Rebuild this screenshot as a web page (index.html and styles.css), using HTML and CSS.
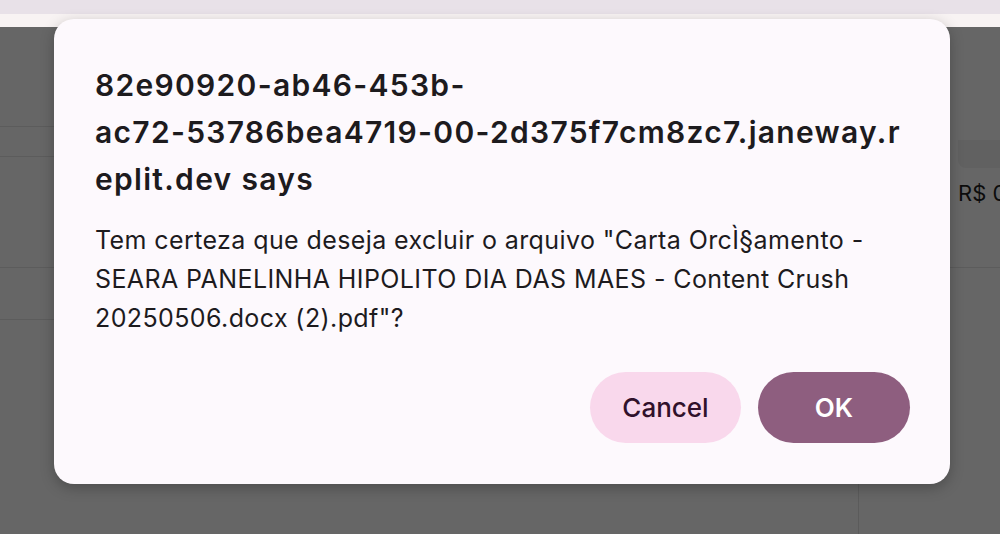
FILE: index.html
```html
<!DOCTYPE html>
<html lang="pt">
<head>
<meta charset="utf-8">
<title>Confirm</title>
<link rel="stylesheet" href="styles.css">
</head>
<body>
<div class="chrome"></div>
<div class="subbar"></div>
<main class="page">
  <div class="left">
    <div class="row r1"></div>
    <div class="row r2"></div>
    <div class="row r3"></div>
    <div class="row r4"></div>
  </div>
  <div class="right">
    <div class="field"></div>
    <div class="price">R$ 0,00</div>
    <div class="rline"></div>
    <div class="vpanel"></div>
  </div>
  <div class="overlay"></div>
</main>
<div class="dialog" role="dialog">
  <h1 class="title">82e90920-ab46-453b-<br>ac72-53786bea4719-00-2d375f7cm8zc7.janeway.r<br>eplit.dev says</h1>
  <p class="message">Tem certeza que deseja excluir o arquivo "Carta OrcÌ§amento -<br>SEARA PANELINHA HIPOLITO DIA DAS MAES - Content Crush<br>20250506.docx (2).pdf"?</p>
  <div class="actions">
    <button class="btn cancel">Cancel</button>
    <button class="btn ok">OK</button>
  </div>
</div>
</body>
</html>
```
FILE: styles.css
```css
html, body {
  margin: 0;
  padding: 0;
  width: 1000px;
  height: 534px;
  overflow: hidden;
  font-family: Inter, "Noto Sans", sans-serif;
}
.chrome {
  height: 14px;
  background: #e8e1e8;
}
.subbar {
  height: 13px;
  background: #f8f3f3;
}
.page {
  position: relative;
  height: 507px;
  background: #ffffff;
  display: flex;
}
.left {
  flex: 1;
}
.row {
  border-bottom: 1px solid #e6e6e6;
}
.r1 { height: 99px; }
.r2 { height: 29px; }
.r3 { height: 110px; }
.r4 { height: 51px; }
.right {
  width: 142px;
  display: flex;
  flex-direction: column;
}
.field {
  margin-top: 113px;
  margin-left: 100px;
  height: 28px;
  border-radius: 0 0 0 8px;
  background: #f2f2f2;
}
.price {
  margin-top: 10px;
  padding-left: 100px;
  font-size: 22px;
  line-height: 30px;
  color: #1f1f1f;
  white-space: nowrap;
  overflow: hidden;
}
.rline {
  margin-top: 59px;
  border-bottom: 1px solid #e6e6e6;
}
.vpanel {
  flex: 1;
  border-left: 1px solid #e4e4e4;
}
.overlay {
  position: absolute;
  inset: 0;
  background: rgba(0, 0, 0, 0.6);
}
.dialog {
  position: absolute;
  left: 54px;
  top: 19px;
  width: 896px;
  height: 465px;
  box-sizing: border-box;
  padding: 43px 40px 41px 41px;
  background: #fdf9fd;
  border-radius: 20px;
  box-shadow: 0 4px 14px rgba(0, 0, 0, 0.25);
  display: flex;
  flex-direction: column;
}
.title {
  margin: 0;
  font-size: 30px;
  line-height: 47px;
  font-weight: 600;
  color: #1d1b1e;
  letter-spacing: 1.3px;
}
.message {
  margin: 18px 0 0;
  font-size: 25px;
  line-height: 39px;
  font-weight: 400;
  color: #1d1b1e;
  letter-spacing: 0.4px;
}
.actions {
  margin-top: auto;
  display: flex;
  justify-content: flex-end;
  gap: 17px;
}
.btn {
  border: none;
  height: 71px;
  border-radius: 36px;
  font-family: Inter, "Noto Sans", sans-serif;
  font-size: 26px;
  font-weight: 500;
  cursor: pointer;
  padding: 0;
}
.cancel {
  width: 151px;
  background: #f9d8ec;
  color: #31112b;
}
.ok {
  width: 152px;
  background: #8e5e7f;
  color: #ffffff;
  font-weight: 600;
}
```
